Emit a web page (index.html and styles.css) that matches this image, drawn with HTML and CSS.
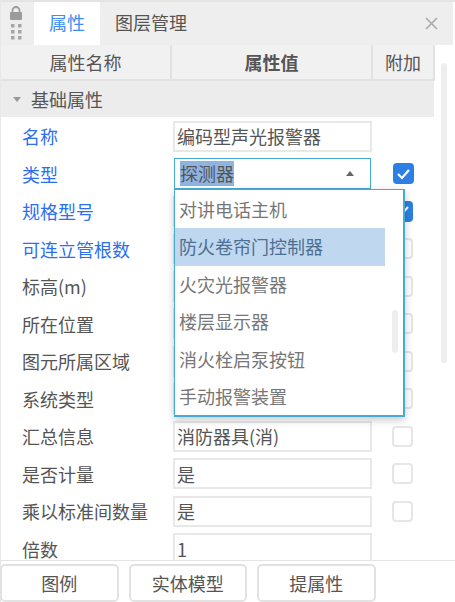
FILE: index.html
```html
<!DOCTYPE html>
<html lang="zh-CN">
<head>
    <meta charset="UTF-8">
    <title>属性</title>
    <link rel="stylesheet" href="styles.css">
</head>
<body>
    <div class="panel">
        <!-- Tabs -->
        <div class="topbar">
            <div class="grip">
                <svg width="14" height="36" viewBox="0 0 14 36">
                    <path d="M3.5 6V4.5a3.5 3.5 0 0 1 7 0V6" fill="none" stroke="#9b9b9b" stroke-width="1.8"/>
                    <rect x="1" y="6" width="12" height="8" rx="1" fill="#9b9b9b"/>
                    <rect x="2" y="18" width="3.5" height="3.5" fill="#a5a5a5"/>
                    <rect x="9" y="18" width="3.5" height="3.5" fill="#a5a5a5"/>
                    <rect x="2" y="24" width="3.5" height="3.5" fill="#a5a5a5"/>
                    <rect x="9" y="24" width="3.5" height="3.5" fill="#a5a5a5"/>
                    <rect x="2" y="30" width="3.5" height="3.5" fill="#a5a5a5"/>
                    <rect x="9" y="30" width="3.5" height="3.5" fill="#a5a5a5"/>
                </svg>
            </div>
            <div class="tab active">属性</div>
            <div class="tab">图层管理</div>
            <svg class="close" width="13" height="13" viewBox="0 0 13 13">
                <path d="M1 1l11 11M12 1L1 12" stroke="#aaa" stroke-width="1.6" fill="none"/>
            </svg>
        </div>

        <!-- Table head -->
        <div class="table-head">
            <div class="col-name">属性名称</div>
            <div class="col-value">属性值</div>
            <div class="col-extra">附加</div>
        </div>

        <div class="table-body">
            <div class="rows">
                <div class="group">
                    <span class="arrow"></span>基础属性
                </div>

                <div class="row">
                    <div class="label blue">名称</div>
                    <div class="value">编码型声光报警器</div>
                </div>

                <div class="row">
                    <div class="label blue">类型</div>
                    <div class="value select">
                        <span class="selected">探测器</span>
                        <span class="caret"></span>
                    </div>
                    <div class="check on"><svg width="15" height="12" viewBox="0 0 15 12"><path d="M2 6l4 4 7-8" fill="none" stroke="#fff" stroke-width="2.2"/></svg></div>

                    <!-- Open dropdown -->
                    <div class="dropdown">
                        <div class="option">对讲电话主机</div>
                        <div class="option hover">防火卷帘门控制器</div>
                        <div class="option">火灾光报警器</div>
                        <div class="option">楼层显示器</div>
                        <div class="option">消火栓启泵按钮</div>
                        <div class="option">手动报警装置</div>
                        <div class="drop-scroll"></div>
                    </div>
                </div>

                <div class="row">
                    <div class="label blue">规格型号</div>
                    <div class="value"></div>
                    <div class="check on"><svg width="15" height="12" viewBox="0 0 15 12"><path d="M2 6l4 4 7-8" fill="none" stroke="#fff" stroke-width="2.2"/></svg></div>
                </div>

                <div class="row">
                    <div class="label blue">可连立管根数</div>
                    <div class="value"></div>
                    <div class="check"></div>
                </div>

                <div class="row">
                    <div class="label">标高(m)</div>
                    <div class="value"></div>
                    <div class="check"></div>
                </div>

                <div class="row">
                    <div class="label">所在位置</div>
                    <div class="value"></div>
                    <div class="check"></div>
                </div>

                <div class="row">
                    <div class="label">图元所属区域</div>
                    <div class="value"></div>
                    <div class="check"></div>
                </div>

                <div class="row">
                    <div class="label">系统类型</div>
                    <div class="value"></div>
                    <div class="check"></div>
                </div>

                <div class="row">
                    <div class="label">汇总信息</div>
                    <div class="value">消防器具(消)</div>
                    <div class="check"></div>
                </div>

                <div class="row">
                    <div class="label">是否计量</div>
                    <div class="value">是</div>
                    <div class="check"></div>
                </div>

                <div class="row">
                    <div class="label">乘以标准间数量</div>
                    <div class="value">是</div>
                    <div class="check"></div>
                </div>

                <div class="row">
                    <div class="label">倍数</div>
                    <div class="value">1</div>
                </div>
            </div>
            <div class="scrollbar"></div>
        </div>

        <!-- Footer buttons -->
        <div class="footer">
            <button>图例</button>
            <button>实体模型</button>
            <button>提属性</button>
        </div>
    </div>
</body>
</html>
```

FILE: styles.css
```css
* {
    box-sizing: border-box;
}

html, body {
    margin: 0;
    padding: 0;
    overflow: hidden;
}

body {
    width: 455px;
    height: 602px;
    background: white;
    font-family: "Noto Sans CJK SC", "Liberation Sans", sans-serif;
    font-size: 18px;
    color: #555;
}

.panel {
    display: flex;
    flex-direction: column;
    height: 602px;
    border-top: 2px solid #e4e4e4;
    border-left: 1px solid #e8e8e8;
}

/* Tabs */
.topbar {
    display: flex;
    align-items: center;
    height: 43px;
    margin-right: 2px;
    background: #eeeeef;
    flex-shrink: 0;
}

.grip {
    width: 33px;
    height: 43px;
    padding: 4px 0 0 8px;
}

.tab {
    height: 43px;
    line-height: 41px;
    text-align: center;
}

.tab.active {
    width: 66px;
    background: white;
    color: #3d8ef0;
}

.topbar .tab:not(.active) {
    margin-left: 15px;
}

.close {
    margin-left: auto;
    margin-right: 15px;
}

/* Table head */
.table-head {
    display: flex;
    width: 434px;
    height: 36px;
    line-height: 35px;
    background: #f1f1f1;
    border-bottom: 2px solid #e2e2e2;
    text-align: center;
    flex-shrink: 0;
}

.col-name {
    width: 171px;
    border-right: 2px solid #e2e2e2;
}

.col-value {
    width: 201px;
    border-right: 2px solid #e2e2e2;
    font-weight: bold;
}

.col-extra {
    width: 62px;
    border-right: 2px solid #e2e2e2;
}

/* Rows */
.table-body {
    position: relative;
    flex: 1;
    min-height: 0;
}

.rows {
    height: 100%;
    overflow: hidden;
}

.group {
    display: flex;
    align-items: center;
    width: 433px;
    height: 36px;
    padding-left: 12px;
    background: #ececec;
}

.arrow {
    width: 0;
    height: 0;
    margin-right: 10px;
    border-left: 4px solid transparent;
    border-right: 4px solid transparent;
    border-top: 5px solid #999;
}

.row {
    position: relative;
    display: flex;
    align-items: center;
    height: 37.5px;
    padding-top: 1px;
    line-height: 20px;
}

.label {
    width: 172px;
    padding-left: 21px;
    white-space: nowrap;
}

.label.blue {
    color: #2c6fef;
}

.value {
    display: flex;
    align-items: center;
    width: 199px;
    height: 31px;
    padding-left: 2px;
    border: 2px solid #e8e8e8;
    background: white;
}

/* Select in open state */
.select {
    width: 197px;
    margin-left: 1px;
    padding-left: 5px;
    padding-right: 16px;
    justify-content: space-between;
    border: 1px solid #46abd2;
}

.selected {
    height: 25px;
    line-height: 24px;
    background: #8fb4e0;
    color: #555;
}

.caret {
    width: 0;
    height: 0;
    border-left: 4px solid transparent;
    border-right: 4px solid transparent;
    border-bottom: 5px solid #666;
}

.check {
    display: flex;
    align-items: center;
    justify-content: center;
    width: 21px;
    height: 21px;
    margin-left: 20px;
    border: 2px solid #e6e6e6;
    border-radius: 4px;
    background: white;
}

.check.on {
    background: #2d7fe3;
    border-color: #2d7fe3;
}

.select + .check {
    margin-left: 22px;
}

/* Dropdown over the rows */
.dropdown {
    position: absolute;
    top: 34px;
    left: 173px;
    z-index: 2;
    width: 231px;
    height: 228px;
    padding-top: 1px;
    background: white;
    border: 2px solid #46abd2;
    border-width: 1px 2px 2px 1px;
    box-shadow: 0 3px 8px rgba(0, 0, 0, 0.22);
}

.option {
    width: 210px;
    height: 37.5px;
    line-height: 36px;
    padding-left: 4px;
    color: #777;
}

.option.hover {
    background: #c0d8ef;
    color: #4c6f93;
}

.drop-scroll {
    position: absolute;
    top: 120px;
    left: 217px;
    width: 6px;
    height: 43px;
    border-radius: 3px;
    background: #eeeeee;
}

.scrollbar {
    position: absolute;
    top: -18px;
    left: 440px;
    width: 6px;
    height: 300px;
    border-radius: 3px;
    background: #eeeeee;
}

/* Footer */
.footer {
    display: flex;
    gap: 10px;
    height: 42px;
    padding-top: 3px;
    margin-left: -1px;
    border-top: 1px solid #e4e4e4;
    flex-shrink: 0;
}

.footer button {
    width: 118.5px;
    height: 38px;
    font-family: inherit;
    font-size: 18px;
    color: #555;
    background: white;
    border: 2px solid #e2e2e2;
    border-radius: 5px;
}
```
